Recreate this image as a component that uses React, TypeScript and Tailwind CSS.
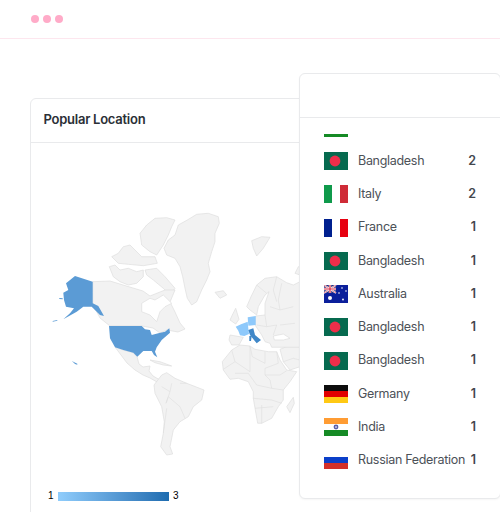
import React from "react";

// Traces are written in 3x crop coordinates; z() turns them into page-pixel paths (viewBox is page coordinates).
const z = (ox: number, oy: number, pts: string, close = true) =>
  "M" +
  pts
    .trim()
    .split(/\s+/)
    .map((p) => {
      const [x, y] = p.split(",").map(Number);
      return `${(ox + x / 3).toFixed(1)},${(oy + y / 3).toFixed(1)}`;
    })
    .join(" L") +
  (close ? " Z" : "");

const A = (p: string, c = true) => z(100, 205, p, c);
const B = (p: string, c = true) => z(50, 270, p, c);
const E = (p: string, c = true) => z(215, 260, p, c);
const F = (p: string, c = true) => z(215, 340, p, c);
const S = (p: string, c = true) => z(130, 350, p, c);

const land = [
  A("192,130 205,105 225,90 235,60 262,45 290,28 325,25 355,35 358,55 345,85 345,110 335,140 325,175 330,200 320,225 305,255 290,290 275,300 262,280 255,250 248,215 240,185 225,160 200,150"),
  A("120,85 140,60 165,40 200,38 225,45 215,65 205,90 190,120 170,150 150,140 125,120"),
  A("135,195 170,190 195,215 225,250 210,270 190,250 160,225 140,210"),
  A("35,155 55,145 70,125 90,120 105,135 125,155 165,155 172,175 130,182 85,178 55,175"),
  A("28,185 45,180 60,195 85,190 110,200 130,195 130,215 110,235 85,240 60,230 40,215"),
  E("0,97 25,92 35,105 15,115"),
  E("250,20 255,20 255,45 240,40"),
  z(40, 200, "635,122 665,110 690,112 670,145 650,168 640,145"),
  // Canada
  "M92.7,281.7 L110,281 L123,285 L133,288 L143,291 L150,296 L165,290 L175,290 L170,302 L175,312 L180,323 L185,329 L178,332 L167,330 L160,333 L153,328 L142,326 L110,326 L100,318 L92.7,304 Z",
  // Mexico / central America
  "M115,347 L123,350 L133,352.7 L137,356.7 L139,364 L143,367 L150,366 L149,371 L153,376 L160,380 L166,383 L163,386 L157,382 L150,378 L143,375 L135,370 L127,363 L121,355 Z",
  S("60,30 90,35 125,48 100,45 75,38"),
  S("72,105 95,75 110,68 135,85 170,100 222,120 215,150 190,170 175,200 150,215 130,240 120,290 128,312 110,315 92,290 100,250 103,215 95,170 75,130"),
  F("25,90 22,65 50,30 75,15 105,18 120,28 160,35 185,35 195,60 215,90 245,95 225,125 205,150 205,180 190,200 170,235 140,250 128,250 120,205 115,175 115,155 100,125 70,115 45,118"),
  F("215,200 235,172 238,190 225,218"),
  F("195,28 240,10 255,10 255,80 225,90 205,65"),
  E("95,140 108,110 125,75 150,55 185,50 215,68 235,75 255,65 255,262 170,262 165,250 150,245 140,225 120,195 122,168 150,165 150,130 162,95 150,105 130,140 125,165 105,150"),
  E("45,225 85,232 72,255 50,255 42,240"),
  E("52,165 62,145 72,178 62,192 45,180"),
];

const water = [
  A("125,295 150,280 165,285 190,270 215,295 195,305 180,320 170,350 150,330 125,320"),
  E("175,228 205,222 225,235 205,240 178,240"),
];

const borders = [
  S("95,110 120,125 125,100", false),
  S("120,125 108,160 115,140 150,170 165,205", false),
  S("110,175 100,250", false),
  S("150,100 170,100", false),
  F("50,30 60,65 25,88", false),
  F("60,65 105,95 105,18", false),
  F("105,18 112,50 150,70 150,35", false),
  F("185,35 190,70 150,85 150,105 195,105 215,92", false),
  F("60,100 100,100 125,135 170,145 165,120 150,105", false),
  F("115,175 170,180 200,190", false),
  F("120,205 175,200", false),
  F("140,195 140,250", false),
  F("170,145 205,150", false),
  E("150,165 155,200 125,195", false),
  E("155,200 185,195 175,225", false),
  E("165,140 195,150 235,140", false),
  E("200,70 190,120 195,150", false),
  E("125,75 155,100", false),
  E("185,50 175,90 185,125", false),
  E("195,195 240,190", false),
  F("205,65 235,55 255,60", false),
];

function Flag({ children }: { children: React.ReactNode }) {
  return (
    <svg viewBox="0 0 24 18" className="w-6 h-[18px] shrink-0">
      {children}
    </svg>
  );
}

const flags: Record<string, React.ReactNode> = {
  bd: (
    <Flag>
      <rect width="24" height="18" fill="#066a4f" />
      <circle cx="11" cy="9" r="5.4" fill="#ee2e4a" />
    </Flag>
  ),
  it: (
    <Flag>
      <rect width="24" height="18" fill="#fff" />
      <rect width="8" height="18" fill="#0f9a4b" />
      <rect x="16" width="8" height="18" fill="#cf2b37" />
    </Flag>
  ),
  fr: (
    <Flag>
      <rect width="24" height="18" fill="#fff" />
      <rect width="8" height="18" fill="#00208f" />
      <rect x="16" width="8" height="18" fill="#e70010" />
    </Flag>
  ),
  au: (
    <Flag>
      <rect width="24" height="18" fill="#0b1f9b" />
      <rect width="12" height="8" fill="#26307e" />
      <path d="M0,0 L12,8 M12,0 L0,8" stroke="#fff" strokeWidth="1.6" />
      <path d="M0,0 L12,8 M12,0 L0,8" stroke="#d8253f" strokeWidth="0.6" />
      <path d="M6,0 V8 M0,4 H12" stroke="#fff" strokeWidth="2.4" />
      <path d="M6,0 V8 M0,4 H12" stroke="#d8253f" strokeWidth="1.2" />
      <circle cx="6" cy="13" r="2" fill="#fff" />
      <circle cx="18" cy="3" r=".8" fill="#fff" />
      <circle cx="22" cy="6" r=".8" fill="#fff" />
      <circle cx="15" cy="8" r=".8" fill="#fff" />
      <circle cx="19" cy="14.5" r=".9" fill="#fff" />
    </Flag>
  ),
  de: (
    <Flag>
      <rect width="24" height="6" fill="#0d0d0d" />
      <rect y="6" width="24" height="6" fill="#e10000" />
      <rect y="12" width="24" height="6" fill="#ffc914" />
    </Flag>
  ),
  in: (
    <Flag>
      <rect width="24" height="18" fill="#fff" />
      <rect width="24" height="6" fill="#ff9c33" />
      <rect y="12" width="24" height="6" fill="#158a25" />
      <circle cx="12" cy="9" r="2.4" fill="#5a5ea8" />
      <circle cx="12" cy="9" r="1" fill="#c8c8e6" />
    </Flag>
  ),
  ru: (
    <Flag>
      <rect width="24" height="6" fill="#fff" />
      <rect y="6" width="24" height="6" fill="#0b3fc9" />
      <rect y="12" width="24" height="6" fill="#d3302a" />
    </Flag>
  ),
};

const rows: [string, string, number][] = [
  ["bd", "Bangladesh", 2],
  ["it", "Italy", 2],
  ["fr", "France", 1],
  ["bd", "Bangladesh", 1],
  ["au", "Australia", 1],
  ["bd", "Bangladesh", 1],
  ["bd", "Bangladesh", 1],
  ["de", "Germany", 1],
  ["in", "India", 1],
  ["ru", "Russian Federation", 1],
];

export default function App() {
  return (
    <div className="relative w-[500px] h-[512px] overflow-hidden bg-white font-['Inter',sans-serif]">
      <header className="h-[39px] border-b border-[#fde6ee] flex items-center gap-[4px] pl-[31px] pb-[1px]">
        <span className="w-2 h-2 rounded-full bg-[#ffabc8]" />
        <span className="w-2 h-2 rounded-full bg-[#ffabc8]" />
        <span className="w-2 h-2 rounded-full bg-[#ffabc8]" />
      </header>

      <section className="ml-[30px] mt-[59px] w-[520px] h-[500px] border border-[#e9eaec] rounded-tl-[6px]">
        <div className="h-[44px] border-b border-[#e9eaec] flex items-center pl-[12.5px] pb-[1px]">
          <h2 className="text-[13px] tracking-[-0.25px] font-semibold text-[#2b2f36]">Popular Location</h2>
        </div>
        <div className="pl-[9px] pt-[57px]">
          <svg viewBox="40 200 260 270" className="w-[260px] h-[270px] block">
            {land.map((d, i) => (
              <path key={i} d={d} fill="#f2f2f2" stroke="#dedede" strokeWidth="0.7" strokeLinejoin="round" />
            ))}
            {water.map((d, i) => (
              <path key={i} d={d} fill="#fff" stroke="#dedede" strokeWidth="0.7" />
            ))}
            {borders.map((d, i) => (
              <path key={i} d={d} fill="none" stroke="#dedede" strokeWidth="0.6" />
            ))}
            <path
              d={B("177,168 275,168 285,178 300,180 305,195 325,190 345,185 358,175 360,188 335,210 320,232 315,245 322,262 312,255 305,243 280,243 262,260 250,248 220,240 195,232 180,205")}
              fill="#5b9bd5"
            />
            <path
              d={B("48,40 75,18 128,35 128,100 145,108 162,138 150,135 125,110 100,110 80,125 40,148 60,130 72,115 48,110 42,90 40,68 55,60")}
              fill="#5b9bd5"
            />
            <path
              d={B("8,153 22,150 22,152 8,155") + " " + B("28,84 38,85 38,88 28,87") + " " + B("65,272 70,275 82,281 82,284 75,282")}
              fill="#5b9bd5"
            />
            <path d={E("62,200 78,193 98,185 100,205 102,222 88,228 75,226 70,212")} fill="#8ec9fb" />
            <path d={E("98,172 122,168 122,195 100,197")} fill="#8ec9fb" />
            <path d={E("100,210 115,205 120,225 138,240 125,250 105,225")} fill="#3f87c8" />
            <path d={E("103,228 110,228 108,243 103,243")} fill="#3f87c8" />
          </svg>
          <div className="mt-[21px] ml-[8px] flex items-center gap-[4px] font-['Liberation_Sans',sans-serif] text-[10px] text-black leading-none">
            <span className="w-[6px]">1</span>
            <div className="w-[111px] h-[9px] bg-gradient-to-r from-[#90cdfc] to-[#1d6cb0]" />
            <span>3</span>
          </div>
        </div>
      </section>

      <aside className="absolute left-[299px] top-[73px] w-[202px] h-[426px] bg-white border border-[#e9eaec] rounded-[6px] shadow-[0_1px_2px_rgba(0,0,0,0.04)]">
        <div className="h-[44px] border-b border-[#e9eaec]" />
        <div className="pl-[24px]">
          <div className="w-6 h-[3.5px] bg-[#158a25] mt-[15.5px]" />
          <ul className="mt-[7.5px]">
            {rows.map(([flag, name, count], i) => (
              <li key={i} className="h-[33.25px] flex items-center">
                {flags[flag]}
                <span className="ml-[10px] text-[12.5px] tracking-[-0.3px] text-[#4c5158] whitespace-nowrap">{name}</span>
                <span className="ml-auto mr-[24px] text-[12.5px] font-semibold text-[#43474e]">{count}</span>
              </li>
            ))}
          </ul>
        </div>
      </aside>
    </div>
  );
}
